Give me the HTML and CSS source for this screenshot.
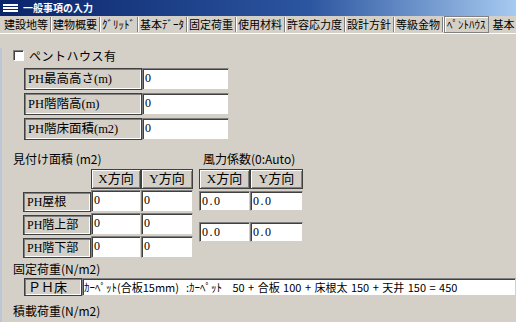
FILE: index.html
```html
<!DOCTYPE html>
<html lang="ja">
<head>
    <meta charset="UTF-8">
    <title>一般事項の入力</title>
    <link rel="stylesheet" href="styles.css">
</head>
<body>
<div class="window">
    <div class="titlebar">
        <svg class="title-icon" width="15" height="10" viewBox="0 0 15 10">
            <rect x="0" y="1" width="15" height="2" fill="#fff"/>
            <rect x="0" y="4" width="15" height="2" fill="#fff"/>
            <rect x="0" y="7" width="15" height="2" fill="#fff"/>
        </svg>
        <span>一般事項の入力</span>
    </div>

    <div class="tabs">
        <span class="tab">建設地等</span>
        <span class="tab">建物概要</span>
        <span class="tab">ｸﾞﾘｯﾄﾞ</span>
        <span class="tab">基本ﾃﾞｰﾀ</span>
        <span class="tab">固定荷重</span>
        <span class="tab">使用材料</span>
        <span class="tab">許容応力度</span>
        <span class="tab">設計方針</span>
        <span class="tab">等級金物</span>
        <span class="tab active">ﾍﾟﾝﾄﾊｳｽ</span>
        <span class="tab">基本</span>
    </div>

    <div class="panel">
        <div class="check-row"><span class="checkbox"></span>ペントハウス有</div>

        <div class="fields">
            <div class="field"><div class="cap">PH最高高さ(m)</div><div class="input">0</div></div>
            <div class="field"><div class="cap">PH階階高(m)</div><div class="input">0</div></div>
            <div class="field"><div class="cap">PH階床面積(m2)</div><div class="input">0</div></div>
        </div>

        <div class="areas">
            <div class="group">
                <div class="heading">見付け面積 (m2)</div>
                <div class="area-grid">
                    <div></div>
                    <div class="head">X方向</div>
                    <div class="head">Y方向</div>
                    <div class="cap small">PH屋根</div>
                    <div class="input">0</div>
                    <div class="input">0</div>
                    <div class="cap small">PH階上部</div>
                    <div class="input">0</div>
                    <div class="input">0</div>
                    <div class="cap small">PH階下部</div>
                    <div class="input">0</div>
                    <div class="input">0</div>
                </div>
            </div>
            <div class="group wind">
                <div class="heading">風力係数(0:Auto)</div>
                <div class="wind-grid">
                    <div class="head">X方向</div>
                    <div class="head">Y方向</div>
                    <div class="input num">0.0</div>
                    <div class="input num">0.0</div>
                    <div class="input num lower">0.0</div>
                    <div class="input num lower">0.0</div>
                </div>
            </div>
        </div>

        <div class="heading load">固定荷重(N/m2)</div>
        <div class="load-row">
            <div class="cap floor">ＰＨ床</div>
            <div class="input wide">ｶｰﾍﾟｯﾄ(合板15mm)  :ｶｰﾍﾟｯﾄ   50 + 合板 100 + 床根太 150 + 天井 150 = 450</div>
        </div>
        <div class="heading live">積載荷重(N/m2)</div>
    </div>
</div>
</body>
</html>
```

FILE: styles.css
```css
body {
    margin: 0;
    background-color: #d4d0c8;
    font-family: "Liberation Serif", "Noto Sans CJK JP", serif;
    color: #000;
}
.window {
    width: 516px;
    height: 322px;
    overflow: hidden;
    background-color: #d4d0c8;
}
.titlebar {
    height: 16px;
    display: flex;
    align-items: center;
    gap: 5px;
    padding-left: 3px;
    background: linear-gradient(to right, #0a246a, #2c56a0 60%, #a6caf0);
    color: #fff;
    font-family: "Noto Sans CJK JP", sans-serif;
    font-size: 10px;
    font-weight: bold;
    line-height: 16px;
}
.title-icon {
    display: block;
}
.tabs {
    height: 17px;
    display: flex;
    align-items: center;
    padding-left: 2px;
    border-bottom: 1px solid #fff;
    font-family: "Noto Sans CJK JP", sans-serif;
    font-size: 11px;
    line-height: 15px;
    white-space: nowrap;
}
.tab {
    padding: 0 2px;
    border-right: 1px solid #808080;
    box-shadow: 1px 0 0 #fff;
}
.tab.active {
    border: 1px solid #808080;
    box-shadow: inset 1px 1px 0 #fff;
    padding: 0 2px;
    margin: 0 2px 0 1px;
}
.panel {
    border-left: 2px solid #bcc6d4;
    padding-left: 10px;
    height: 290px;
}
.check-row {
    margin-top: 14px;
    height: 15px;
    display: flex;
    align-items: center;
    gap: 5px;
    font-family: "Noto Sans CJK JP", sans-serif;
    font-size: 12px;
    letter-spacing: 0.5px;
    line-height: 15px;
}
.checkbox {
    width: 9px;
    height: 9px;
    background-color: #fff;
    border: 1px solid;
    border-color: #808080 #fff #fff #808080;
    box-shadow: inset 1px 1px 0 #404040;
    margin-left: 1px;
}
.fields {
    margin: 5px 0 0 12px;
    display: flex;
    flex-direction: column;
    gap: 3px;
}
.field {
    display: flex;
    height: 22px;
}
.cap {
    box-sizing: border-box;
    border: 1px solid #404040;
    box-shadow: inset 1px 1px 0 #808080, inset -1px -1px 0 #fff;
    padding: 0 3px;
    font-size: 12.5px;
    line-height: 20px;
    white-space: nowrap;
}
.field .cap {
    width: 118px;
}
.input {
    box-sizing: border-box;
    background-color: #fff;
    border: 1px solid;
    border-color: #808080 #d4d0c8 #d4d0c8 #808080;
    box-shadow: inset 1px 1px 0 #404040;
    padding: 0 2px;
    font-size: 12px;
    line-height: 18px;
    white-space: pre;
    overflow: hidden;
}
.field .input {
    width: 87px;
}
.heading {
    font-family: "Noto Sans CJK JP", sans-serif;
    font-size: 12px;
    line-height: 16px;
    padding-left: 1px;
    white-space: nowrap;
}
.areas {
    margin-top: 11px;
    display: flex;
}
.group {
    width: 181px;
}
.group.wind {
    margin-left: 6px;
}
.group.wind .heading {
    padding-left: 4px;
}
.area-grid {
    margin: 2px 0 0 11px;
    display: grid;
    grid-template-columns: 68px 50px 52px;
    grid-template-rows: 20px 22px 22px 22px;
    row-gap: 1px;
}
.wind-grid {
    margin-top: 2px;
    display: grid;
    grid-template-columns: 51px 53px;
    grid-template-rows: 20px 20px 29px;
    row-gap: 2px;
}
.wind-grid .input {
    height: 20px;
}
.wind-grid .input.lower {
    align-self: end;
}
.head {
    box-sizing: border-box;
    border: 1px solid #404040;
    box-shadow: inset 1px 1px 0 #fff, inset -1px -1px 0 #808080;
    text-align: center;
    font-size: 13px;
    line-height: 18px;
}
.cap.small {
    line-height: 18px;
    margin-top: 2px;
    font-size: 12px;
}
.input.num {
    letter-spacing: 1.5px;
}
.heading.load {
    margin-top: 3px;
}
.load-row {
    margin: 1px 0 0 12px;
    display: flex;
    height: 18px;
}
.cap.floor {
    width: 58px;
    line-height: 16px;
    font-size: 13px;
    padding-left: 3px;
    font-family: "Noto Sans CJK JP", sans-serif;
}
.input.wide {
    flex: 1;
    font-family: "Noto Sans CJK JP", sans-serif;
    font-size: 11px;
    word-spacing: 1px;
    line-height: 16px;
    padding-left: 1px;
}
.heading.live {
    margin-top: 7px;
}
```
